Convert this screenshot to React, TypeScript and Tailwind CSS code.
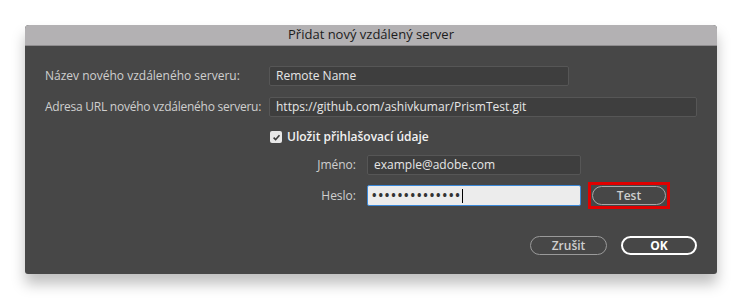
import React from 'react';

function Field({ value, className }: { value: string; className: string }) {
  return (
    <div className={`h-[20px] flex items-center px-[6px] rounded-[2px] border border-[#565656] bg-[#3e3e3e] text-[#e6e6e6] ${className}`}>
      {value}
    </div>
  );
}

function Pill({ label, className }: { label: string; className: string }) {
  return (
    <button className={`h-[19px] rounded-full flex items-center justify-center ${className}`}>
      {label}
    </button>
  );
}

export default function App() {
  return (
    <div className="w-[742px] h-[300px] bg-white pt-[25px] pl-[25px] font-['Open_Sans',sans-serif] text-[12px] whitespace-nowrap">
      <div className="w-[692px] h-[249px] flex flex-col bg-[#474747] rounded-t-[4px] rounded-b-[3px] shadow-[0_10px_14px_rgba(0,0,0,0.25)]">
        {/* Title bar */}
        <div className="h-[21px] flex items-center justify-center rounded-t-[4px] bg-[#b3b1b3] border-b border-[#8f8d8f] text-[#1c1c1c] text-[13px]">
          Přidat nový vzdálený server
        </div>

        <div className="flex flex-col pt-[20px] text-[#cfcfcf]">
          <div className="flex items-center h-[20px]">
            <span className="w-[244px] pl-[20px]">Název nového vzdáleného serveru:</span>
            <Field value="Remote Name" className="w-[300px]" />
          </div>

          <div className="flex items-center h-[20px] mt-[11px]">
            <span className="w-[244px] pl-[20px] tracking-[-0.25px]">Adresa URL nového vzdáleného serveru:</span>
            <Field value="https://github.com/ashivkumar/PrismTest.git" className="w-[428px]" />
          </div>

          <div className="flex items-center h-[16px] mt-[12px] pl-[245px]">
            <span className="w-[12px] h-[12px] rounded-[2px] bg-[#e8e8e8] flex items-center justify-center">
              <svg width="9" height="9" viewBox="0 0 10 10">
                <path d="M1.8 5.2 L4 7.4 L8.3 2.4" fill="none" stroke="#3a3a3a" strokeWidth="1.8" />
              </svg>
            </span>
            <span className="ml-[5px] text-[#f2f2f2] font-semibold">Uložit přihlašovací údaje</span>
          </div>

          <div className="flex items-center h-[20px] mt-[10px]">
            <span className="w-[331px] text-right">Jméno:</span>
            <Field value="example@adobe.com" className="w-[214px] ml-[11px]" />
          </div>

          <div className="flex items-center h-[27px] mt-[7px]">
            <span className="w-[331px] text-right">Heslo:</span>
            <div className="w-[214px] h-[21px] ml-[11px] flex items-center px-[4px] rounded-[2px] border border-[#3b88d8] bg-[#ececec] text-[#333] tracking-[1.9px] text-[12px] font-bold">
              ••••••••••••••
              <span className="w-[1px] h-[14px] bg-black" />
            </div>
            <div className="ml-[7px] w-[82px] h-[27px] border-[3px] border-[#e00000] flex items-center justify-center">
              <Pill label="Test" className="w-[74px] border border-[#a8a8a8] text-[#cfcfcf] font-semibold" />
            </div>
          </div>

          <div className="flex justify-end items-center mt-[27px] pr-[20px] gap-[14px]">
            <Pill label="Zrušit" className="w-[77px] border border-[#9a9a9a] text-[#cfcfcf] font-semibold" />
            <Pill label="OK" className="w-[76px] border-2 border-white text-white font-bold" />
          </div>
        </div>
      </div>
    </div>
  );
}
